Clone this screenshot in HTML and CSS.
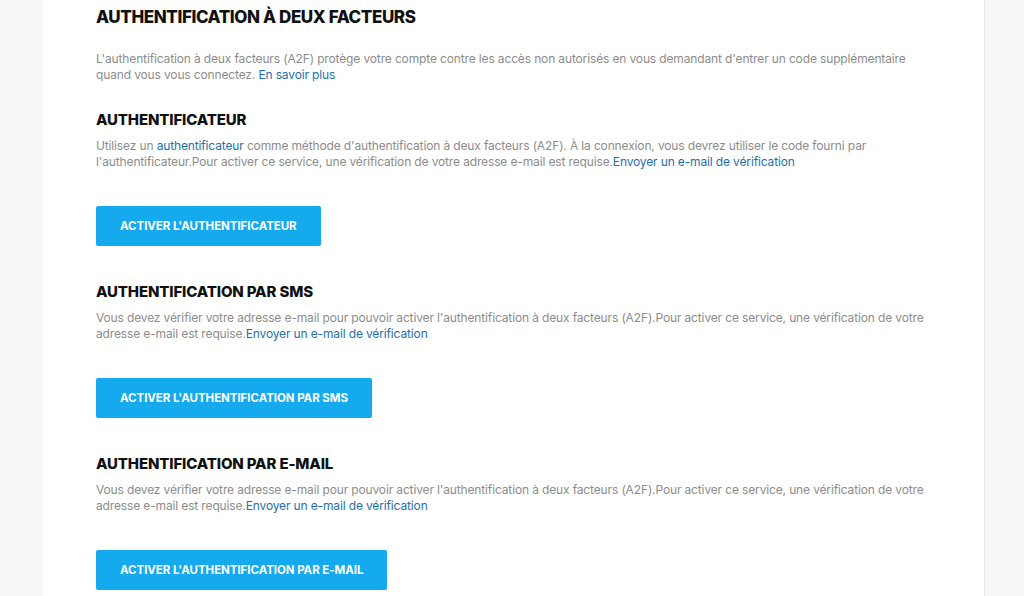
FILE: index.html
```html
<!DOCTYPE html>
<html lang="fr">
<head>
<meta charset="utf-8">
<link rel="stylesheet" href="styles.css">
</head>
<body>
<main class="card">
  <h1 class="title">AUTHENTIFICATION À DEUX FACTEURS</h1>
  <p class="intro">L'authentification à deux facteurs (A2F) protège votre compte contre les accès non autorisés en vous demandant d'entrer un code supplémentaire quand vous vous connectez. <a href="#">En savoir plus</a></p>

  <section class="method">
    <h2>AUTHENTIFICATEUR</h2>
    <p>Utilisez un <a href="#">authentificateur</a> comme méthode d'authentification à deux facteurs (A2F). À la connexion, vous devrez utiliser le code fourni par l'authentificateur.Pour activer ce service, une vérification de votre adresse e-mail est requise.<a href="#">Envoyer un e-mail de vérification</a></p>
    <button class="btn">ACTIVER L'AUTHENTIFICATEUR</button>
  </section>

  <section class="method">
    <h2>AUTHENTIFICATION PAR SMS</h2>
    <p>Vous devez vérifier votre adresse e-mail pour pouvoir activer l'authentification à deux facteurs (A2F).Pour activer ce service, une vérification de votre adresse e-mail est requise.<a href="#">Envoyer un e-mail de vérification</a></p>
    <button class="btn">ACTIVER L'AUTHENTIFICATION PAR SMS</button>
  </section>

  <section class="method">
    <h2>AUTHENTIFICATION PAR E-MAIL</h2>
    <p>Vous devez vérifier votre adresse e-mail pour pouvoir activer l'authentification à deux facteurs (A2F).Pour activer ce service, une vérification de votre adresse e-mail est requise.<a href="#">Envoyer un e-mail de vérification</a></p>
    <button class="btn">ACTIVER L'AUTHENTIFICATION PAR E-MAIL</button>
  </section>
</main>
</body>
</html>
```
FILE: styles.css
```css
html, body {
  margin: 0;
  padding: 0;
  background: #f7f7f7;
  height: 100%;
}
body {
  font-family: Inter, "Noto Sans", sans-serif;
  overflow: hidden;
}
.card {
  margin-left: 43px;
  width: 888px;
  min-height: 100%;
  background: #ffffff;
  border-right: 1px solid #e8e8e8;
  padding: 7px 0 0 53px;
}
.title {
  margin: 0;
  font-size: 17px;
  line-height: 20px;
  font-weight: 800;
  color: #111;
  letter-spacing: -0.4px;
}
p {
  margin: 0;
  font-size: 12px;
  line-height: 16px;
  color: #8c8c8c;
  letter-spacing: -0.14px;
  max-width: 830px;
}
a {
  color: #1e6fae;
  text-decoration: none;
}
.intro {
  margin-top: 24px;
}
.method {
  display: flex;
  flex-direction: column;
  align-items: flex-start;
}
.method h2 {
  margin: 37px 0 0 0;
  font-size: 15px;
  line-height: 18px;
  font-weight: 800;
  color: #111;
  letter-spacing: -0.15px;
}
.intro + .method h2 { margin-top: 28px; }
.method p {
  margin-top: 9px;
}
.btn {
  margin-top: 36px;
  height: 40px;
  padding: 0 24px;
  border: none;
  border-radius: 2px;
  background: #15a9ee;
  color: #fff;
  font-family: inherit;
  font-size: 11.5px;
  font-weight: 700;
  letter-spacing: -0.05px;
  cursor: pointer;
}
```
